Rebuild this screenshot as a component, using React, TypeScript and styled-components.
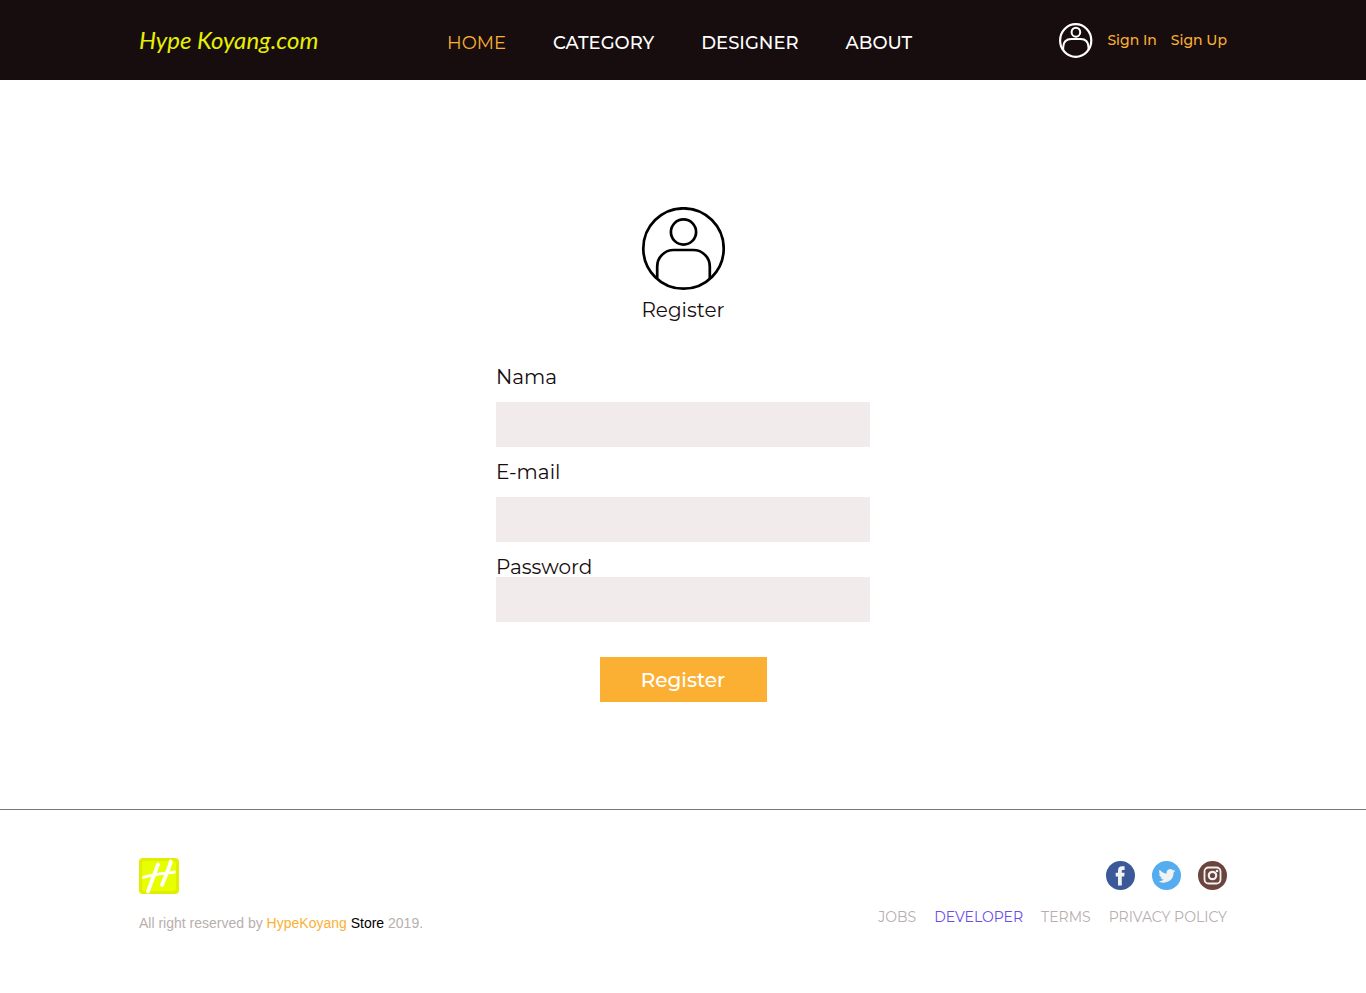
import React from "react";
import styled, { createGlobalStyle } from "styled-components";

const GlobalStyle = createGlobalStyle`
  *, *::before, *::after { box-sizing: border-box; }
  body {
    margin: 0;
    background: #fff;
    color: #170d0e;
    font-family: Montserrat, Inter, sans-serif;
  }
  a { text-decoration: none; }
`;

const Container = styled.div`
  width: 100%;
  max-width: 1088px;
  margin: 0 auto;
  display: flex;
`;

const Header = styled.header`
  background: #170d0e;
`;

const HeaderRow = styled(Container)`
  height: 80px;
  align-items: center;
`;

const Wordmark = styled.a`
  flex: 0 0 308px;
  color: #e6f000;
  font: italic 400 24px/36px Lato, sans-serif;
`;

const Nav = styled.nav`
  display: flex;
  gap: 47px;
  padding-top: 5px;
`;

const NavLink = styled.a<{ $active?: boolean }>`
  color: ${(p) => (p.$active ? "#fbb034" : "#fff")};
  font-size: 18px;
  font-weight: ${(p) => (p.$active ? 400 : 500)};
  line-height: 24px;
`;

const Account = styled.div`
  display: flex;
  align-items: center;
  gap: 14px;
  margin-left: auto;
`;

const AccountLink = styled.a`
  color: #fbb034;
  font-size: 14px;
  font-weight: 500;
  line-height: 20px;
`;

const Main = styled.main`
  display: flex;
  flex-direction: column;
  align-items: center;
  padding: 127px 16px 107px;
`;

const Title = styled.h1`
  margin: 9px 0 47px;
  font-size: 20px;
  font-weight: 400;
  line-height: 20px;
`;

const Form = styled.form`
  display: flex;
  flex-direction: column;
  gap: 15px;
  width: 100%;
  max-width: 374px;
`;

const Field = styled.div<{ $tight?: boolean }>`
  display: flex;
  flex-direction: column;
  gap: ${(p) => (p.$tight ? "0" : "15px")};
`;

const Label = styled.label`
  font-size: 20px;
  line-height: 20px;
`;

const Input = styled.input`
  width: 100%;
  height: 45px;
  padding: 0 12px;
  border: 0;
  border-radius: 0;
  background: #f1ebeb;
  font: inherit;
`;

const SubmitButton = styled.button`
  align-self: center;
  width: 167px;
  height: 45px;
  margin-top: 20px;
  padding: 0;
  border: 0;
  background: #fbb034;
  color: #fff;
  font: 500 20px/24px Montserrat, Inter, sans-serif;
  cursor: pointer;
`;

const Footer = styled.footer`
  border-top: 1px solid #777;
  padding: 48px 0 60px;
`;

const FooterRow = styled(Container)`
  justify-content: space-between;
`;

const Brand = styled.div`
  display: flex;
  flex-direction: column;
  gap: 19px;
`;

const Copyright = styled.p`
  margin: 0;
  color: #b8aeae;
  font: 14px/20px "Liberation Sans", sans-serif;
`;

const BrandLink = styled.a`
  color: #fbb034;
`;

const StoreName = styled.span`
  color: #000;
`;

const FooterSide = styled.div`
  display: flex;
  flex-direction: column;
  align-items: flex-end;
  gap: 17px;
  padding-top: 3px;
`;

const Social = styled.div`
  display: flex;
  gap: 17px;
`;

const SocialLink = styled.a`
  display: block;
  height: 29px;
`;

const FooterLinks = styled.nav`
  display: flex;
  gap: 18px;
`;

const FooterLink = styled.a<{ $visited?: boolean }>`
  color: ${(p) => (p.$visited ? "#6c4bea" : "#b8aeae")};
  font-size: 14px;
  line-height: 20px;
`;

function UserIcon() {
  return (
    <svg width="84" height="84" viewBox="0 0 84 84" fill="none" stroke="#000" strokeWidth="2.700" aria-hidden="true">
      <circle cx="42.500" cy="41.500" r="40.200" />
      <circle cx="42.500" cy="25" r="12.600" />
      <path d="M16.200 71.500V59.500A16.500 16.500 0 0 1 32.700 43H52.300A16.500 16.500 0 0 1 68.800 59.500V71.500" />
    </svg>
  );
}

function AccountIcon() {
  return (
    <svg width="34" height="35" viewBox="0 0 34 35" fill="none" stroke="#fff" strokeWidth="2.200" aria-hidden="true">
      <ellipse cx="16.700" cy="17.500" rx="15.600" ry="16.300" />
      <ellipse cx="16.900" cy="9.200" rx="4.300" ry="4.500" strokeWidth="2" />
      <path d="M4.200 27V24.500C4.200 19 7 16 12.500 16H21.500C27 16 29.500 19 29.500 24.500V27" strokeWidth="2" />
    </svg>
  );
}

function BrandMark() {
  return (
    <svg width="40" height="36" viewBox="0 0 40 36" role="img" aria-label="HypeKoyang">
      <rect width="40" height="36" rx="4" fill="#e0ee00" />
      <rect x="3" y="3" width="34" height="30" rx="3" fill="#e8ff00" />
      <g fill="none" stroke="#fff" strokeLinecap="round">
        <path d="M19 6.500C16.500 13 13 22 9 33.500" strokeWidth="3.800" />
        <path d="M31.800 3.500C30 11 26 19 23 27" strokeWidth="3.800" />
        <path d="M4.500 19.300C14 16.500 25 15.500 35.500 14" strokeWidth="2.800" />
      </g>
    </svg>
  );
}

function FacebookIcon() {
  return (
    <svg width="29" height="29" viewBox="0 0 29 29" aria-hidden="true">
      <circle cx="14.500" cy="14.500" r="14.500" fill="#3b5998" />
      <path
        d="M12 24.500V15.500H9.700V11.800H12V9.500C12 6.700 13.500 5.300 16.200 5.300H18.600V9H17.100C16.100 9 15.800 9.500 15.800 10.300V11.800H18.600L18.200 15.500H15.800V24.500Z"
        fill="#f1f2f2"
      />
    </svg>
  );
}

function TwitterIcon() {
  return (
    <svg width="29" height="29" viewBox="0 0 29 29" aria-hidden="true">
      <circle cx="14.500" cy="14.500" r="14.500" fill="#55acee" />
      <g transform="translate(6.500 6.500) scale(.7)">
        <path
          d="M24 4.600a10 10 0 0 1-2.800.8 4.900 4.900 0 0 0 2.200-2.700 10 10 0 0 1-3.100 1.200 4.900 4.900 0 0 0-8.400 4.500A14 14 0 0 1 1.700 3.100a4.900 4.900 0 0 0 1.500 6.600 4.900 4.900 0 0 1-2.200-.6 4.900 4.900 0 0 0 3.900 4.900 4.900 4.900 0 0 1-2.200.1 4.900 4.900 0 0 0 4.600 3.400A9.900 9.900 0 0 1 0 19.500 14 14 0 0 0 21.500 7.100 10 10 0 0 0 24 4.600Z"
          fill="#f1f2f2"
        />
      </g>
    </svg>
  );
}

function InstagramIcon() {
  return (
    <svg width="29" height="29" viewBox="0 0 29 29" aria-hidden="true">
      <circle cx="14.500" cy="14.500" r="14.500" fill="#6b453d" />
      <g fill="none" stroke="#f1f2f2">
        <rect x="6.500" y="6.500" width="16" height="16" rx="4" strokeWidth="1.800" />
        <circle cx="14.500" cy="14.500" r="3.700" strokeWidth="2.200" />
      </g>
      <circle cx="19" cy="10" r="1.300" fill="#f1f2f2" />
    </svg>
  );
}

export default function App() {
  return (
    <>
      <GlobalStyle />
      <Header>
        <HeaderRow>
          <Wordmark href="#">Hype Koyang.com</Wordmark>
          <Nav>
            <NavLink href="#" $active>HOME</NavLink>
            <NavLink href="#">CATEGORY</NavLink>
            <NavLink href="#">DESIGNER</NavLink>
            <NavLink href="#">ABOUT</NavLink>
          </Nav>
          <Account>
            <AccountIcon />
            <AccountLink href="#">Sign In</AccountLink>
            <AccountLink href="#">Sign Up</AccountLink>
          </Account>
        </HeaderRow>
      </Header>
      <Main>
        <UserIcon />
        <Title>Register</Title>
        <Form onSubmit={(e) => e.preventDefault()}>
          <Field>
            <Label htmlFor="nama">Nama</Label>
            <Input id="nama" type="text" />
          </Field>
          <Field>
            <Label htmlFor="email">E-mail</Label>
            <Input id="email" type="email" />
          </Field>
          <Field $tight>
            <Label htmlFor="password">Password</Label>
            <Input id="password" type="password" />
          </Field>
          <SubmitButton type="submit">Register</SubmitButton>
        </Form>
      </Main>
      <Footer>
        <FooterRow>
          <Brand>
            <BrandMark />
            <Copyright>
              All right reserved by <BrandLink href="#">HypeKoyang</BrandLink>{" "}
              <StoreName>Store</StoreName> 2019.
            </Copyright>
          </Brand>
          <FooterSide>
            <Social>
              <SocialLink href="#" aria-label="Facebook"><FacebookIcon /></SocialLink>
              <SocialLink href="#" aria-label="Twitter"><TwitterIcon /></SocialLink>
              <SocialLink href="#" aria-label="Instagram"><InstagramIcon /></SocialLink>
            </Social>
            <FooterLinks>
              <FooterLink href="#">JOBS</FooterLink>
              <FooterLink href="#" $visited>DEVELOPER</FooterLink>
              <FooterLink href="#">TERMS</FooterLink>
              <FooterLink href="#">PRIVACY POLICY</FooterLink>
            </FooterLinks>
          </FooterSide>
        </FooterRow>
      </Footer>
    </>
  );
}
